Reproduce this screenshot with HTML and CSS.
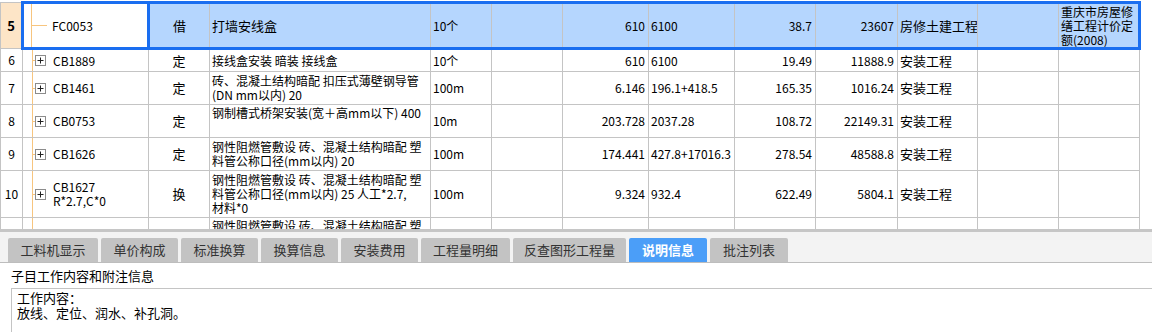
FILE: index.html
```html
<!DOCTYPE html>
<html lang="zh">
<head>
<meta charset="utf-8">
<link rel="stylesheet" href="styles.css">
</head>
<body>
<div class="grid-wrap">
<table class="grid">
<colgroup>
<col class="c-no"><col class="c-code"><col class="c-type"><col class="c-name"><col class="c-unit"><col class="c-e1"><col class="c-qty"><col class="c-price"><col class="c-up"><col class="c-sum"><col class="c-spec"><col class="c-e2"><col class="c-lib">
</colgroup>
<tr class="h48 sel">
<td class="no cur">5</td>
<td class="code selcode"><div class="tree"><span class="tick long"></span><span class="ctext">FC0053</span></div></td>
<td class="type">借</td>
<td class="name">打墙安线盒</td>
<td>10个</td>
<td></td>
<td class="num">610</td>
<td>6100</td>
<td class="num">38.7</td>
<td class="num">23607</td>
<td>房修土建工程</td>
<td></td>
<td class="lib last">重庆市房屋修<br>缮工程计价定<br>额(2008)</td>
</tr>
<tr class="h23">
<td class="no">6</td>
<td class="code"><div class="tree"><span class="tick"></span><svg class="plus" width="11" height="11" viewBox="0 0 11 11"><rect x="0.5" y="0.5" width="10" height="10" fill="#fff" stroke="#8c8c8c"/><path d="M2.5 5.5h6M5.5 2.5v6" stroke="#222" fill="none"/></svg><span class="ctext">CB1889</span></div></td>
<td class="type">定</td>
<td class="name">接线盒安装 暗装 接线盒</td>
<td>10个</td>
<td></td>
<td class="num">610</td>
<td>6100</td>
<td class="num">19.49</td>
<td class="num">11888.9</td>
<td class="spec">安装工程</td>
<td></td>
<td></td>
</tr>
<tr class="h33">
<td class="no">7</td>
<td class="code"><div class="tree"><span class="tick"></span><svg class="plus" width="11" height="11" viewBox="0 0 11 11"><rect x="0.5" y="0.5" width="10" height="10" fill="#fff" stroke="#8c8c8c"/><path d="M2.5 5.5h6M5.5 2.5v6" stroke="#222" fill="none"/></svg><span class="ctext">CB1461</span></div></td>
<td class="type">定</td>
<td class="name">砖、混凝土结构暗配 扣压式薄壁钢导管<br>(DN mm以内) 20</td>
<td>100m</td>
<td></td>
<td class="num">6.146</td>
<td>196.1+418.5</td>
<td class="num">165.35</td>
<td class="num">1016.24</td>
<td class="spec">安装工程</td>
<td></td>
<td></td>
</tr>
<tr class="h33">
<td class="no">8</td>
<td class="code"><div class="tree"><span class="tick"></span><svg class="plus" width="11" height="11" viewBox="0 0 11 11"><rect x="0.5" y="0.5" width="10" height="10" fill="#fff" stroke="#8c8c8c"/><path d="M2.5 5.5h6M5.5 2.5v6" stroke="#222" fill="none"/></svg><span class="ctext">CB0753</span></div></td>
<td class="type">定</td>
<td class="name top">钢制槽式桥架安装(宽＋高mm以下) 400</td>
<td>10m</td>
<td></td>
<td class="num">203.728</td>
<td>2037.28</td>
<td class="num">108.72</td>
<td class="num">22149.31</td>
<td class="spec">安装工程</td>
<td></td>
<td></td>
</tr>
<tr class="h33">
<td class="no">9</td>
<td class="code"><div class="tree"><span class="tick"></span><svg class="plus" width="11" height="11" viewBox="0 0 11 11"><rect x="0.5" y="0.5" width="10" height="10" fill="#fff" stroke="#8c8c8c"/><path d="M2.5 5.5h6M5.5 2.5v6" stroke="#222" fill="none"/></svg><span class="ctext">CB1626</span></div></td>
<td class="type">定</td>
<td class="name">钢性阻燃管敷设 砖、混凝土结构暗配 塑<br>料管公称口径(mm以内) 20</td>
<td>100m</td>
<td></td>
<td class="num">174.441</td>
<td>427.8+17016.3</td>
<td class="num">278.54</td>
<td class="num">48588.8</td>
<td class="spec">安装工程</td>
<td></td>
<td></td>
</tr>
<tr class="h47">
<td class="no">10</td>
<td class="code"><div class="tree"><span class="tick"></span><svg class="plus" width="11" height="11" viewBox="0 0 11 11"><rect x="0.5" y="0.5" width="10" height="10" fill="#fff" stroke="#8c8c8c"/><path d="M2.5 5.5h6M5.5 2.5v6" stroke="#222" fill="none"/></svg><span class="ctext">CB1627<br>R*2.7,C*0</span></div></td>
<td class="type">换</td>
<td class="name">钢性阻燃管敷设 砖、混凝土结构暗配 塑<br>料管公称口径(mm以内) 25  人工*2.7,<br>材料*0</td>
<td>100m</td>
<td></td>
<td class="num">9.324</td>
<td>932.4</td>
<td class="num">622.49</td>
<td class="num">5804.1</td>
<td class="spec">安装工程</td>
<td></td>
<td></td>
</tr>
<tr class="h12">
<td class="no"></td>
<td class="code"></td>
<td class="type"></td>
<td class="name top">钢性阻燃管敷设 砖、混凝土结构暗配 塑</td>
<td></td>
<td></td>
<td></td>
<td></td>
<td></td>
<td></td>
<td></td>
<td></td>
<td></td>
</tr>
</table>
</div>
<div class="sep"></div>
<div class="tabbar">
<div class="tab w90">工料机显示</div>
<div class="tab w77">单价构成</div>
<div class="tab w77">标准换算</div>
<div class="tab w77">换算信息</div>
<div class="tab w77">安装费用</div>
<div class="tab w89">工程量明细</div>
<div class="tab w113">反查图形工程量</div>
<div class="tab w78 active">说明信息</div>
<div class="tab w78">批注列表</div>
</div>
<div class="note-title">子目工作内容和附注信息</div>
<div class="note-box">工作内容：<br>放线、定位、润水、补孔洞。</div>
</body>
</html>
```

FILE: styles.css
```css
html, body {
  margin: 0;
  padding: 0;
}
body {
  width: 1152px;
  height: 332px;
  overflow: hidden;
  background: #fff;
  font-family: "Noto Sans CJK SC", "Noto Sans", sans-serif;
  color: #000;
}
.grid-wrap {
  height: 229px;
  overflow: hidden;
  padding-top: 1px;
  box-sizing: border-box;
}
.grid {
  table-layout: fixed;
  border-collapse: collapse;
  width: 1139px;
  font-size: 12px;
  line-height: 14px;
}
.c-no { width: 22px; }
.c-code { width: 126px; }
.c-type { width: 61px; }
.c-name { width: 221px; }
.c-unit { width: 61px; }
.c-e1 { width: 71px; }
.c-qty { width: 86px; }
.c-price { width: 86px; }
.c-up { width: 81px; }
.c-sum { width: 82px; }
.c-spec { width: 80px; }
.c-e2 { width: 81px; }
.c-lib { width: 81px; }

.grid td {
  border: 1px solid #c4c4c4;
  padding: 0 2px;
  white-space: nowrap;
  overflow: hidden;
  vertical-align: middle;
}
.h48 { height: 46px; }
.h23 { height: 23px; }
.h33 { height: 33px; }
.h47 { height: 47px; }
.h12 { height: 12px; }

.grid td.no {
  text-align: center;
  padding: 0;
}
.grid td.no.cur {
  background: #fde5c7;
  font-weight: bold;
  font-size: 13px;
}
.grid td.type {
  text-align: center;
  font-size: 13px;
}
.grid td.num {
  text-align: right;
  padding-right: 3px;
}
.grid td.name.top {
  vertical-align: top;
  padding-top: 1px;
}
.grid td.spec {
  font-size: 13px;
}
.grid td.code {
  padding: 0;
  background: linear-gradient(#f7c57f, #f7c57f) no-repeat 9px 0 / 1px 100%;
}
.tree {
  display: flex;
  align-items: center;
  padding-left: 10px;
}
.tick {
  width: 2px;
  height: 1px;
  background: #f7c57f;
}
.tick.long {
  width: 15px;
}
.plus {
  display: block;
  flex: none;
}
.ctext {
  margin-left: 7px;
}
.tick.long + .ctext {
  margin-left: 5px;
}

.sel td {
  background: #b5d6fe;
  border-top: 3px solid #1a6ef0;
  border-bottom: 3px solid #1a6ef0;
}
.sel td.no {
  border-top: 1px solid #c4c4c4;
  border-bottom: 1px solid #c4c4c4;
}
.sel td.code.selcode {
  background: #fff linear-gradient(#f7c57f, #f7c57f) no-repeat 7px 0 / 1px 100%;
  border: 3px solid #1a6ef0;
}
.sel td.code .tree {
  padding-left: 8px;
}
.sel td.name {
  font-size: 13px;
}
.sel td.lib {
  vertical-align: top;
  padding-top: 1px;
  font-size: 12px;
  line-height: 14px;
}
.sel td.last {
  border-right: 3px solid #1a6ef0;
}
.sel td:nth-child(11) {
  font-size: 13px;
}

.sep {
  height: 3px;
  background: #c6c6c6;
}
.tabbar {
  background: #f3f3f3;
  border-bottom: 1px solid #bdbdbd;
  display: flex;
  align-items: flex-end;
  gap: 3px;
  padding-left: 8px;
  box-sizing: border-box;
  height: 31px;
}
.tab {
  height: 24px;
  line-height: 24px;
  background: #c3c3c3;
  color: #333;
  font-size: 13px;
  text-align: center;
  border-radius: 2px 2px 0 0;
  flex: none;
}
.tab.active {
  background: #4b9ef8;
  color: #fff;
  font-weight: bold;
}
.w90 { width: 90px; }
.w77 { width: 77px; }
.w89 { width: 89px; }
.w113 { width: 113px; }
.w78 { width: 78px; }

.note-title {
  font-size: 13px;
  line-height: 24px;
  padding: 1px 0 0 11px;
  color: #000;
}
.note-box {
  margin-left: 11px;
  border-top: 1px solid #c4c4c4;
  border-left: 1px solid #c4c4c4;
  padding: 1px 0 0 5px;
  font-size: 13px;
  line-height: 15px;
  height: 60px;
}
```
